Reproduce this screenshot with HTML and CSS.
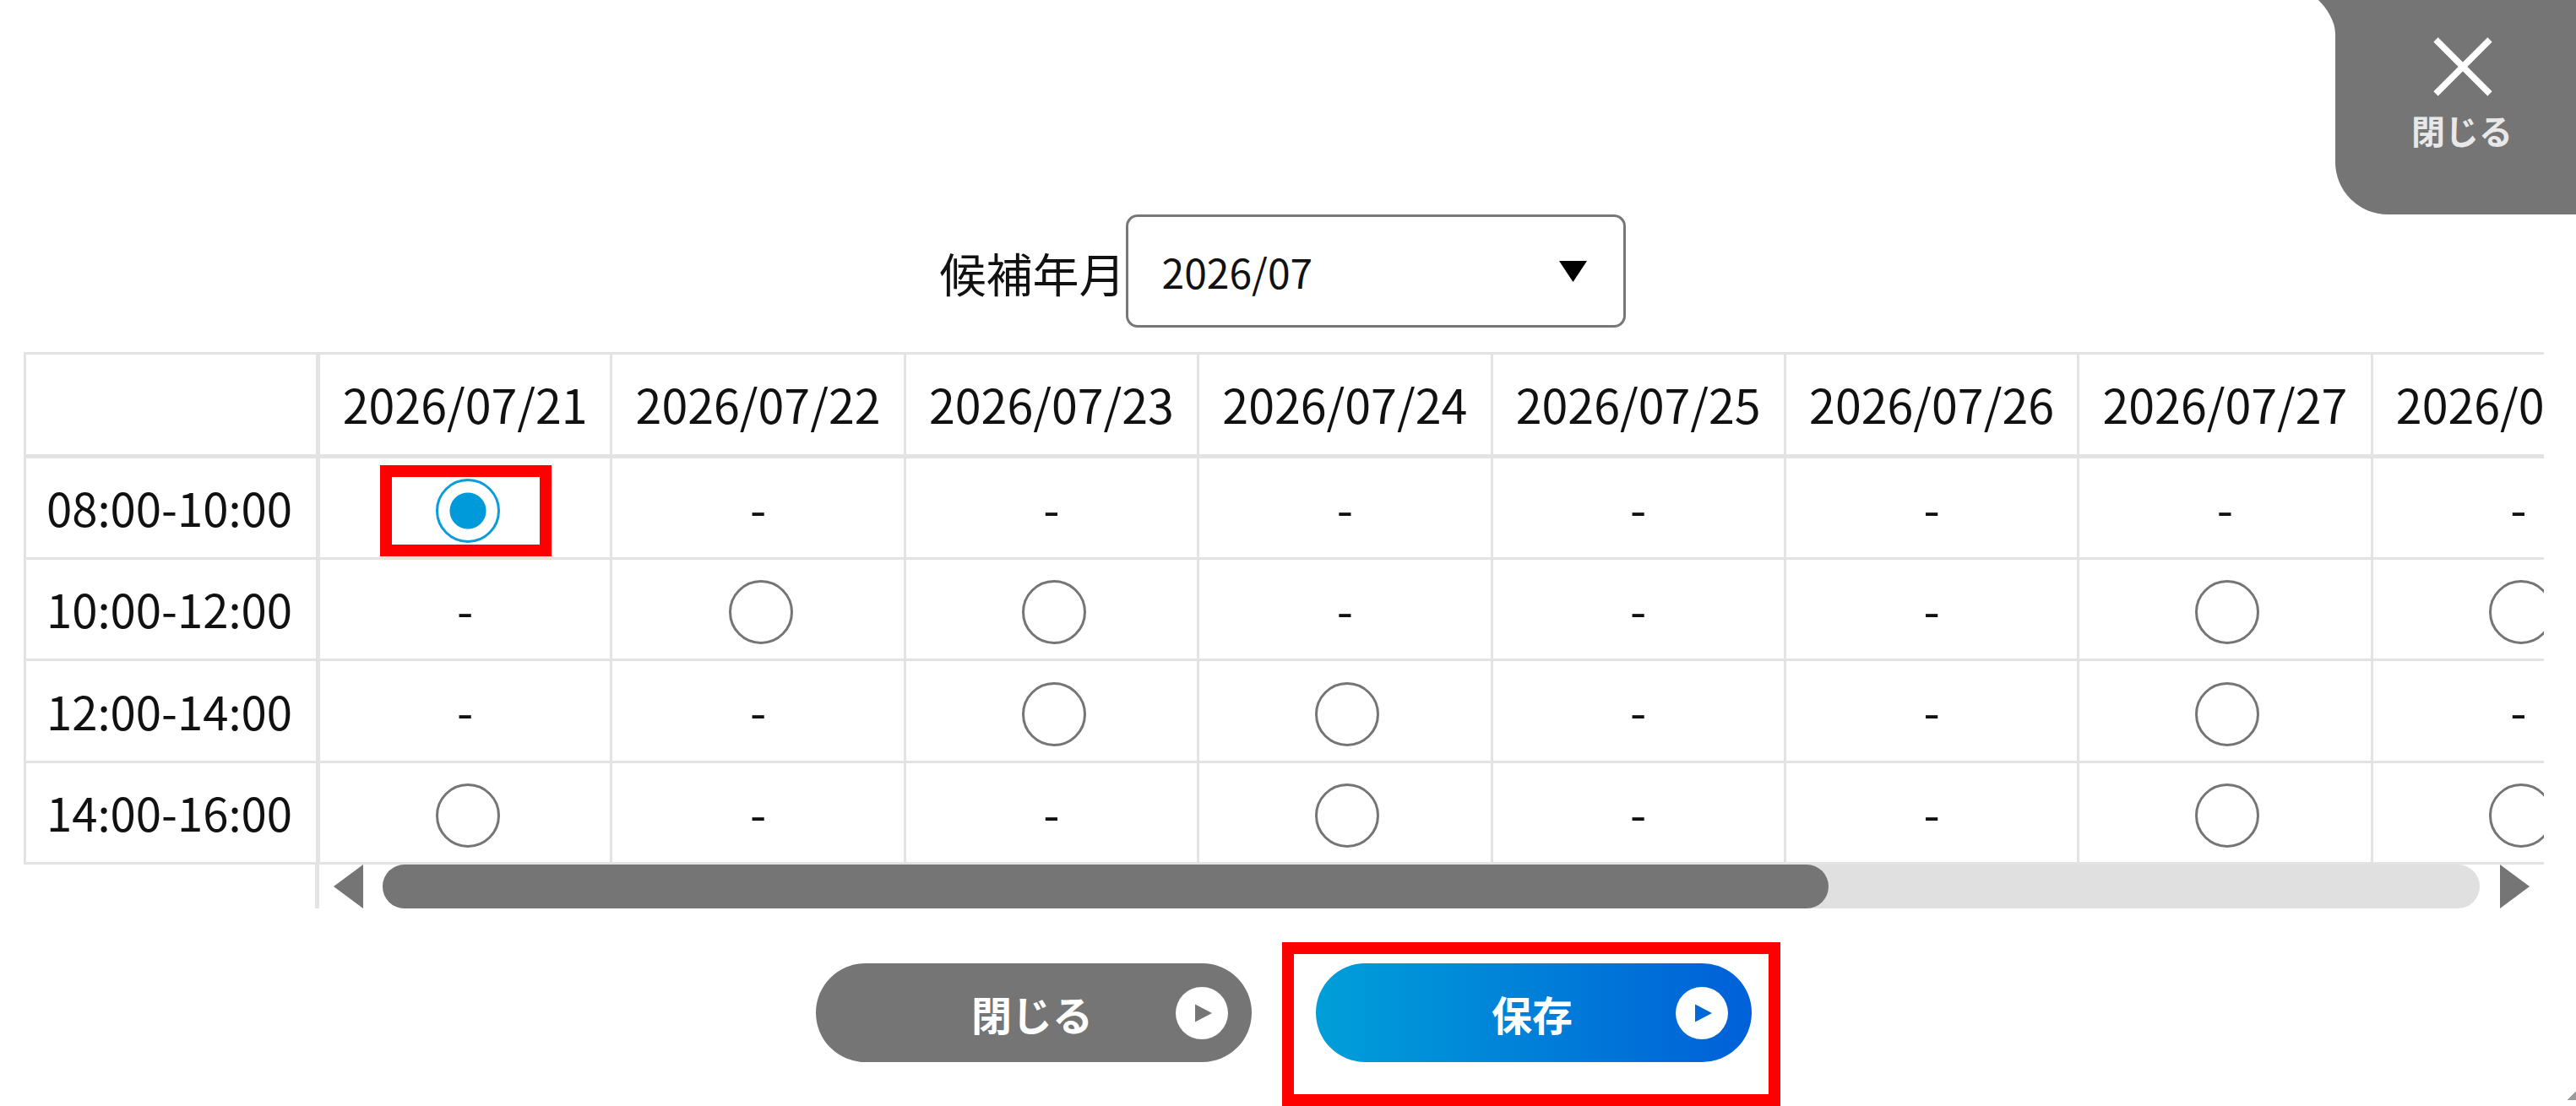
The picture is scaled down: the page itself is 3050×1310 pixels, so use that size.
FILE: index.html
```html
<!DOCTYPE html>
<html lang="ja">
<head>
<meta charset="utf-8">
<title>候補年月</title>
<link rel="stylesheet" href="styles.css">
</head>
<body>
<div class="page">
  <button class="close-tab" type="button">
    <svg class="close-flare" width="20" height="40" viewBox="0 0 20 40"><path d="M0 0C10 10 20 25 20 40V0Z" fill="#757575"/></svg>
    <svg class="close-x" width="70" height="70" viewBox="0 0 70 70"><path d="M3 3L67 67M67 3L3 67" stroke="#fff" stroke-width="7.5" fill="none"/></svg>
    <span class="close-label">閉じる</span>
  </button>

  <div class="month-row">
    <span class="month-label">候補年月</span>
    <div class="month-select">
      <span>2026/07</span>
      <svg width="33" height="25" viewBox="0 0 33 25"><path d="M0 0H33L16.500 25Z" fill="#000"/></svg>
    </div>
  </div>

  <div class="table-wrap">
    <table class="slots">
      <colgroup><col class="col-head"><col class="col-day"><col class="col-day"><col class="col-day"><col class="col-day"><col class="col-day"><col class="col-day"><col class="col-day"><col class="col-day"></colgroup>
      <thead>
        <tr><th></th><th>2026/07/21</th><th>2026/07/22</th><th>2026/07/23</th><th>2026/07/24</th><th>2026/07/25</th><th>2026/07/26</th><th>2026/07/27</th><th>2026/07/28</th></tr>
      </thead>
      <tbody>
        <tr><th>08:00-10:00</th><td><span class="radio is-selected"></span></td><td>-</td><td>-</td><td>-</td><td>-</td><td>-</td><td>-</td><td>-</td></tr>
        <tr><th>10:00-12:00</th><td>-</td><td><span class="radio"></span></td><td><span class="radio"></span></td><td>-</td><td>-</td><td>-</td><td><span class="radio"></span></td><td><span class="radio"></span></td></tr>
        <tr><th>12:00-14:00</th><td>-</td><td>-</td><td><span class="radio"></span></td><td><span class="radio"></span></td><td>-</td><td>-</td><td><span class="radio"></span></td><td>-</td></tr>
        <tr><th>14:00-16:00</th><td><span class="radio"></span></td><td>-</td><td>-</td><td><span class="radio"></span></td><td>-</td><td>-</td><td><span class="radio"></span></td><td><span class="radio"></span></td></tr>
      </tbody>
    </table>
  </div>

  <div class="scroll-row">
    <svg class="scroll-arrow" width="35" height="52" viewBox="0 0 35 52"><path d="M35 0V52L0 26Z" fill="#757575"/></svg>
    <div class="scroll-track"><div class="scroll-thumb"></div></div>
    <svg class="scroll-arrow" width="35" height="52" viewBox="0 0 35 52"><path d="M0 0V52L35 26Z" fill="#757575"/></svg>
  </div>

  <div class="actions">
    <button class="btn btn-close" type="button">
      <span class="btn-text">閉じる</span>
      <svg class="btn-icon" width="62" height="62" viewBox="0 0 62 62"><circle cx="31" cy="31" r="31" fill="#fff"/><path d="M23 20.500V41.500L43 31Z" fill="#757575"/></svg>
    </button>
    <button class="btn btn-save" type="button">
      <span class="btn-text">保存</span>
      <svg class="btn-icon" width="62" height="62" viewBox="0 0 62 62"><circle cx="31" cy="31" r="31" fill="#fff"/><path d="M23 20.500V41.500L43 31Z" fill="#0068d8"/></svg>
    </button>
  </div>

  <span class="resize-corner"></span>
</div>
</body>
</html>
```
FILE: styles.css
```css
*, *::before, *::after { box-sizing: border-box; }

html, body {
  margin: 0;
  height: 100%;
  background: #fff;
}

body {
  font-family: "Noto Sans CJK JP", "Noto Sans", sans-serif;
  color: #111;
  overflow: hidden;
}

.page {
  position: relative;
  width: 3050px;
  height: 1310px;
  overflow: hidden;
  padding-top: 254px;
}

/* top-right close tab */
.close-tab {
  position: absolute;
  top: 0;
  right: 0;
  width: 285px;
  height: 254px;
  padding: 44px 0 0 15px;
  border: 0;
  border-bottom-left-radius: 62px;
  background: #757575;
  color: #fff;
  font: inherit;
  display: flex;
  flex-direction: column;
  align-items: center;
}

.close-flare {
  position: absolute;
  left: -20px;
  top: 0;
}

.close-x {
  display: block;
  margin-left: 2px;
}

.close-label {
  margin-top: 11px;
  font-size: 40px;
  line-height: 58px;
  font-weight: 700;
  color: #e8e8e8;
}

/* month selector */
.month-row {
  display: flex;
  align-items: center;
  justify-content: center;
  padding-right: 13px;
}

.month-label {
  font-size: 55px;
  line-height: 1;
  margin-top: 2px;
}

.month-select {
  width: 592px;
  height: 134px;
  padding: 0 43px 0 40px;
  border: 3px solid #777;
  border-radius: 14px;
  display: flex;
  align-items: center;
  justify-content: space-between;
  font-size: 48px;
  line-height: 1;
}

/* table */
.table-wrap {
  width: 2984px;
  margin: 29px 0 0 28px;
  overflow: hidden;
}

.slots {
  table-layout: fixed;
  width: 3126px;
  border-collapse: collapse;
  font-size: 55.500px;
  line-height: 1;
}

.col-head { width: 347px; }
.col-day { width: 347.380px; }

.slots th,
.slots td {
  padding: 0;
  border: 3px solid #e3e3e3;
  text-align: center;
  font-weight: 400;
  white-space: nowrap;
}

.slots thead tr { height: 122px; }
.slots thead th { border-bottom-width: 5px; }
.slots tbody tr { height: 120.500px; }
.slots tbody th {
  font-size: 54.500px;
  padding-right: 4px;
}
.slots tr > th:first-child { border-right-width: 5px; }

.radio {
  position: relative;
  display: block;
  width: 76px;
  height: 76px;
  margin: 8px 0 0 calc(50% - 35px);
  border: 3px solid #757575;
  border-radius: 50%;
  background: #fff;
}

.radio.is-selected {
  border-color: #0a9cdc;
  background: radial-gradient(circle, #009ada 21px, #fff 22px);
}

/* scrollbar */
.scroll-row {
  display: flex;
  align-items: stretch;
  height: 52px;
  margin-left: 373px;
  width: 2622px;
  border-left: 5px solid #e3e3e3;
  padding-left: 17px;
}

.scroll-arrow { flex: none; display: block; }

.scroll-track {
  flex: 1;
  margin: 0 24px 0 23px;
  border-radius: 26px;
  background: #e0e0e0;
}

.scroll-thumb {
  width: 1712px;
  height: 100%;
  border-radius: 26px;
  background: #757575;
}

/* action buttons */
.actions {
  display: flex;
  justify-content: center;
  gap: 76px;
  margin-top: 65px;
  padding-right: 10px;
}

.btn {
  position: relative;
  width: 516px;
  height: 117px;
  padding: 0 4px 0 0;
  border: 0;
  border-radius: 59px;
  color: #fff;
  font: inherit;
  display: flex;
  align-items: center;
  justify-content: center;
}

.btn-close { background: #757575; }

.btn-save { background: linear-gradient(90deg, #009fd9, #0060d8); }

.btn-text {
  font-size: 48px;
  font-weight: 700;
  line-height: 1;
}

.btn-icon {
  position: absolute;
  right: 28px;
  top: 28px;
}

.btn-save::after {
  content: "";
  position: absolute;
  left: -40px;
  right: -34px;
  top: -25px;
  bottom: -52px;
  border: 14px solid #f00;
}

.radio.is-selected::after {
  content: "";
  position: absolute;
  left: -69px;
  top: -19px;
  width: 203px;
  height: 108px;
  border: 14px solid #f00;
}

.resize-corner {
  position: absolute;
  right: 0;
  top: 1293px;
  width: 10px;
  height: 10px;
  background: linear-gradient(135deg, transparent 50%, #9a9a9a 50%);
}
```
